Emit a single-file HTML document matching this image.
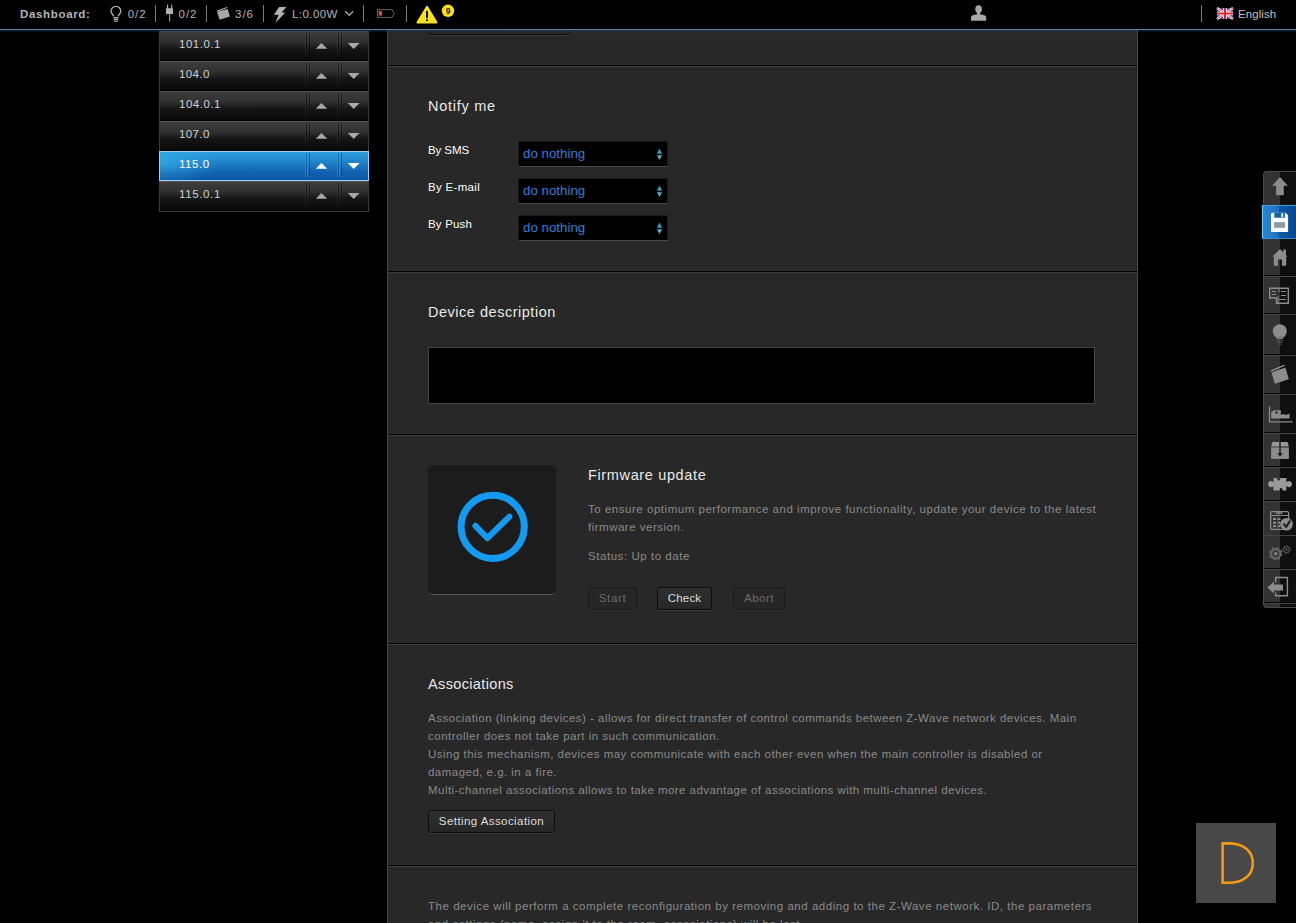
<!DOCTYPE html>
<html><head><meta charset="utf-8">
<style>
*{box-sizing:border-box;margin:0;padding:0}
html,body{width:1296px;height:923px;overflow:hidden;background:#000;font-family:"Liberation Sans",sans-serif;}
body{position:relative}
.abs{position:absolute}
.t{position:absolute;white-space:nowrap;font-size:11.5px;line-height:14px;color:#8a8a8a}
.h{position:absolute;white-space:nowrap;font-size:14.5px;line-height:18px;color:#e8e8e8}
/* top bar */
#topbar{z-index:5;position:absolute;left:0;top:0;width:1296px;height:29px;background:#000}
#topline{z-index:5;position:absolute;left:0;top:29px;width:1296px;height:1px;background:#5d83a6}
#topline2{display:none}
.sep{z-index:6;position:absolute;top:5px;width:1px;height:17px;background:#7c7c7c}
.tb{z-index:6;position:absolute;white-space:nowrap;font-size:11.5px;line-height:14px;color:#b4b4b4;top:7px}
/* list */
#list{position:absolute;left:159px;top:31px;width:210px;height:181px;border:1px solid #3a3a3a;border-top:none;background:#000}
.row{position:absolute;left:0;width:208px;height:30px;background:linear-gradient(#3d3d3d 0%,#303030 35%,#151515 60%,#0a0a0a 100%);border-top:1px solid #555;border-bottom:1px solid #000}
.row .lbl{position:absolute;left:19px;top:5px;font-size:11.5px;line-height:14px;color:#d0d0d0;white-space:nowrap}
.row .s1{position:absolute;top:1px;height:24px;width:1px;background:linear-gradient(#1e1e1e,#080808)}
.row .s2{position:absolute;top:1px;height:24px;width:1px;background:linear-gradient(#474747,#1c1c1c);opacity:.7}
.row svg{position:absolute}
.tri{fill:#a8a8a8}
.row.sel .tri{fill:#fff}
.row.sel .s1{background:#0d4f94;opacity:.6}
.row.sel .s2{background:#3a9ae0;opacity:.5}
.row.sel{left:-1px;width:210px;background:radial-gradient(ellipse 60px 22px at 0 40%,rgba(60,190,240,.55),rgba(60,190,240,0)),linear-gradient(#2a9ddb 0%,#1f80c8 40%,#1262b0 70%,#0c58a6 100%);border:1px solid #9ccff2;}
.row.sel .lbl{color:#fff;left:19px}
/* panel */
#panel{position:absolute;left:387px;top:30px;width:751px;height:893px;background:#282828;border-left:1px solid #444;border-right:1px solid #444}
.div{position:absolute;left:388px;width:749px;height:2px;border-top:1px solid #000;border-bottom:1px solid #3c3c3c}
.sel-box{position:absolute;left:518px;width:150px;height:26px;background:#000;border:1px solid #1a1a1a;border-bottom-color:#4a4a4a;}
.sel-box span{position:absolute;left:4px;top:4px;font-size:13.33px;line-height:16px;color:#2f7fd8;white-space:nowrap}
.btn{position:absolute;height:23px;border:1px solid #0c0c0c;border-radius:3px;background:linear-gradient(#303030,#262626);box-shadow:0 1px 0 #3a3a3a;font-size:11.5px;line-height:14px;color:#ddd;text-align:center;padding-top:3px;white-space:nowrap}
.btn.dis{color:#6c6c6c;border-color:#1a1a1a;box-shadow:0 1px 0 #303030;background:#262626}
</style></head><body>
<div id="topbar"></div><div id="topline"></div><div id="topline2"></div>
<span class="tb" id="dash" style="left:20px;font-weight:bold;letter-spacing:0.66px">Dashboard:</span>
<span class="tb" id="c1" style="left:127.7px;letter-spacing:1.0px">0/2</span>
<div class="sep" style="left:155px"></div>
<span class="tb" id="c2" style="left:178.5px;letter-spacing:1.0px">0/2</span>
<div class="sep" style="left:206px"></div>
<span class="tb" id="c3" style="left:235px;letter-spacing:1.0px">3/6</span>
<div class="sep" style="left:263px"></div>
<span class="tb" id="c4" style="left:292px;letter-spacing:0.43px">L:0.00W</span>
<div class="sep" style="left:363px"></div>
<div class="sep" style="left:406px"></div>
<div class="sep" style="left:1201px"></div>
<span class="tb" id="eng" style="left:1238px;color:#c0c0c0;letter-spacing:0.08px">English</span>

<svg class="abs" style="left:0;top:0;z-index:6" width="1296" height="30" viewBox="0 0 1296 30">
<!-- bulb -->
<g fill="none" stroke="#b0b0b0" stroke-width="1.3">
<path d="M113.6 16.3 C113.4 14.6 111 13.6 111 11.2 A4.9 4.9 0 0 1 120.8 11.2 C120.8 13.6 118.4 14.6 118.2 16.3"/>
<path d="M113.4 17.6 H118.4 M113.6 19.4 H118.2 M114 21.2 H117.8"/>
</g>
<!-- plug -->
<g fill="#b0b0b0"><rect x="167" y="4.6" width="1.1" height="4"/><rect x="171.2" y="4.6" width="1.1" height="4"/><rect x="166" y="8.2" width="7" height="5.8"/><rect x="169" y="14" width="1.1" height="7.6" fill="#9a9a9a"/></g>
<!-- blinds -->
<g fill="#a8a8a8"><path d="M217 11.8 L227.6 8.9 L230 16.6 L219.6 19.8Z"/><path d="M217.2 10.6 L227.2 6.9 L227.5 7.8 L217.5 11.4Z" fill="#c8c8c8"/></g>
<!-- bolt -->
<path d="M279.2 6.9 L286.4 6.9 L281.6 12.6 L285.3 12.6 L275.4 22.9 L278.6 14.8 L273.9 14.8Z" fill="#b4b4b4"/>
<!-- chevron -->
<path d="M345.2 11.2 L349.2 15.3 L353.2 11.2" fill="none" stroke="#a4a4a4" stroke-width="1.3"/>
<!-- battery -->
<path d="M377.5 9.6 H392 L394.2 13.5 L392 17.4 H377.5Z" fill="none" stroke="#6e5e5e" stroke-width="1"/>
<rect x="378.6" y="10.8" width="3.6" height="5" fill="#a83a3a"/><rect x="379.6" y="12" width="1.6" height="2.6" fill="#d07878"/>
<!-- warning -->
<path d="M427 7 L436.2 22.4 L417.8 22.4Z" fill="#f7e21a" stroke="#f7e21a" stroke-width="2.4" stroke-linejoin="round"/>
<rect x="426" y="10.8" width="2" height="7.4" rx=".6" fill="#111"/><rect x="426" y="19.2" width="2" height="2" rx=".6" fill="#111"/>
<circle cx="448" cy="10.8" r="6.2" fill="#f7e21a"/>
<text x="448" y="13.9" font-family="Liberation Sans, sans-serif" font-size="8.5" font-weight="bold" fill="#222" text-anchor="middle">9</text>
<!-- user -->
<g fill="#a8a8a8"><ellipse cx="978.6" cy="9.2" rx="3.3" ry="3.9"/><rect x="977.2" y="12" width="2.8" height="3.5"/><path d="M971 20.8 V17 Q971 15.2 973.5 14.9 L977.2 14.2 H980 L983.7 14.9 Q986.2 15.2 986.2 17 V20.8Z"/></g>
<!-- flag -->
<g><rect x="1217" y="8" width="16" height="11" fill="#2a3f8f"/>
<path d="M1217 8 L1233 19 M1233 8 L1217 19" stroke="#fff" stroke-width="2.4"/>
<path d="M1217 8 L1233 19 M1233 8 L1217 19" stroke="#d8303a" stroke-width="0.9"/>
<path d="M1225 8 V19 M1217 13.5 H1233" stroke="#fff" stroke-width="3.6"/>
<path d="M1225 8 V19 M1217 13.5 H1233" stroke="#e02030" stroke-width="2"/></g>
</svg>
<div id="list">
 <div class="row" style="top:0"><span class="lbl" id="r1" style="letter-spacing:0.52px">101.0.1</span><i class="s2" style="left:145px"></i><i class="s1" style="left:146px"></i><i class="s2" style="left:147px;opacity:.6"></i><i class="s1" style="left:149px;opacity:.7"></i><i class="s2" style="left:177px"></i><i class="s1" style="left:178px"></i><i class="s2" style="left:179px;opacity:.6"></i><i class="s1" style="left:181px;opacity:.7"></i><svg style="left:150px;top:6px" width="56" height="18" viewBox="0 0 56 18"><path d="M5.8 10.8 L11.4 5 L17.2 10.8Z" class="tri"/><path d="M37.8 5 L49.6 5 L43.7 11Z" class="tri"/></svg></div>
 <div class="row" style="top:30px"><span class="lbl" id="r2" style="letter-spacing:0.38px">104.0</span><i class="s2" style="left:145px"></i><i class="s1" style="left:146px"></i><i class="s2" style="left:147px;opacity:.6"></i><i class="s1" style="left:149px;opacity:.7"></i><i class="s2" style="left:177px"></i><i class="s1" style="left:178px"></i><i class="s2" style="left:179px;opacity:.6"></i><i class="s1" style="left:181px;opacity:.7"></i><svg style="left:150px;top:6px" width="56" height="18" viewBox="0 0 56 18"><path d="M5.8 10.8 L11.4 5 L17.2 10.8Z" class="tri"/><path d="M37.8 5 L49.6 5 L43.7 11Z" class="tri"/></svg></div>
 <div class="row" style="top:60px"><span class="lbl" id="r3" style="letter-spacing:0.52px">104.0.1</span><i class="s2" style="left:145px"></i><i class="s1" style="left:146px"></i><i class="s2" style="left:147px;opacity:.6"></i><i class="s1" style="left:149px;opacity:.7"></i><i class="s2" style="left:177px"></i><i class="s1" style="left:178px"></i><i class="s2" style="left:179px;opacity:.6"></i><i class="s1" style="left:181px;opacity:.7"></i><svg style="left:150px;top:6px" width="56" height="18" viewBox="0 0 56 18"><path d="M5.8 10.8 L11.4 5 L17.2 10.8Z" class="tri"/><path d="M37.8 5 L49.6 5 L43.7 11Z" class="tri"/></svg></div>
 <div class="row" style="top:90px"><span class="lbl" id="r4" style="letter-spacing:0.38px">107.0</span><i class="s2" style="left:145px"></i><i class="s1" style="left:146px"></i><i class="s2" style="left:147px;opacity:.6"></i><i class="s1" style="left:149px;opacity:.7"></i><i class="s2" style="left:177px"></i><i class="s1" style="left:178px"></i><i class="s2" style="left:179px;opacity:.6"></i><i class="s1" style="left:181px;opacity:.7"></i><svg style="left:150px;top:6px" width="56" height="18" viewBox="0 0 56 18"><path d="M5.8 10.8 L11.4 5 L17.2 10.8Z" class="tri"/><path d="M37.8 5 L49.6 5 L43.7 11Z" class="tri"/></svg></div>
 <div class="row sel" style="top:120px"><span class="lbl" id="r5" style="letter-spacing:0.55px">115.0</span><i class="s2" style="left:145px"></i><i class="s1" style="left:146px"></i><i class="s2" style="left:147px;opacity:.6"></i><i class="s1" style="left:149px;opacity:.7"></i><i class="s2" style="left:177px"></i><i class="s1" style="left:178px"></i><i class="s2" style="left:179px;opacity:.6"></i><i class="s1" style="left:181px;opacity:.7"></i><svg style="left:150px;top:6px" width="56" height="18" viewBox="0 0 56 18"><path d="M5.8 10.8 L11.4 5 L17.2 10.8Z" class="tri"/><path d="M37.8 5 L49.6 5 L43.7 11Z" class="tri"/></svg></div>
 <div class="row" style="top:150px"><span class="lbl" id="r6" style="letter-spacing:0.64px">115.0.1</span><i class="s2" style="left:145px"></i><i class="s1" style="left:146px"></i><i class="s2" style="left:147px;opacity:.6"></i><i class="s1" style="left:149px;opacity:.7"></i><i class="s2" style="left:177px"></i><i class="s1" style="left:178px"></i><i class="s2" style="left:179px;opacity:.6"></i><i class="s1" style="left:181px;opacity:.7"></i><svg style="left:150px;top:6px" width="56" height="18" viewBox="0 0 56 18"><path d="M5.8 10.8 L11.4 5 L17.2 10.8Z" class="tri"/><path d="M37.8 5 L49.6 5 L43.7 11Z" class="tri"/></svg></div>
</div>

<div id="panel"></div>
<div class="btn" style="left:428px;top:12px;width:142px"></div>
<div class="abs" style="left:0;top:30px;width:1296px;height:3px;background:linear-gradient(rgba(30,60,95,.55),rgba(30,60,95,0))"></div>
<div class="div" style="top:65px"></div>
<div class="div" style="top:271px"></div>
<div class="div" style="top:434px"></div>
<div class="div" style="top:643px"></div>
<div class="div" style="top:865px"></div>

<span class="h" id="h1" style="left:428px;top:97px;letter-spacing:0.73px">Notify me</span>
<span class="t" id="n1" style="left:428px;top:143px;color:#fff;letter-spacing:-0.09px">By SMS</span>
<span class="t" id="n2" style="left:428px;top:180px;color:#fff;letter-spacing:0.31px">By E-mail</span>
<span class="t" id="n3" style="left:428px;top:217px;color:#fff;letter-spacing:0.17px">By Push</span>
<div class="sel-box" style="top:141px"><span id="s1">do nothing</span><svg style="position:absolute;left:136.2px;top:5px" width="8" height="14" viewBox="0 0 8 14"><path d="M4.5 1.4 L7.1 6.8 H1.9Z" fill="#3a98bc"/><path d="M1.9 8.2 H7.1 L4.5 13Z" fill="#56b0c8"/></svg></div>
<div class="sel-box" style="top:178px"><span>do nothing</span><svg style="position:absolute;left:136.2px;top:5px" width="8" height="14" viewBox="0 0 8 14"><path d="M4.5 1.4 L7.1 6.8 H1.9Z" fill="#3a98bc"/><path d="M1.9 8.2 H7.1 L4.5 13Z" fill="#56b0c8"/></svg></div>
<div class="sel-box" style="top:215px"><span>do nothing</span><svg style="position:absolute;left:136.2px;top:5px" width="8" height="14" viewBox="0 0 8 14"><path d="M4.5 1.4 L7.1 6.8 H1.9Z" fill="#3a98bc"/><path d="M1.9 8.2 H7.1 L4.5 13Z" fill="#56b0c8"/></svg></div>

<span class="h" id="h2" style="left:428px;top:303px;letter-spacing:0.52px">Device description</span>
<div class="abs" style="left:428px;top:347px;width:667px;height:57px;background:#000;border:1px solid #444"></div>

<div class="abs" id="fwbox" style="left:428px;top:465px;width:128px;height:130px;background:#1c1c1c;border-radius:5px;border-bottom:1px solid #5a5a5a"></div>
<svg class="abs" style="left:428px;top:465px" width="128" height="130" viewBox="428 465 128 130"><circle cx="492.7" cy="526.8" r="31.6" fill="none" stroke="#149af0" stroke-width="7"/><path d="M475.4 525.8 L487.4 538.2 L509.4 516.6" fill="none" stroke="#149af0" stroke-width="6" stroke-linecap="round" stroke-linejoin="round"/></svg>
<span class="h" id="h3" style="left:588px;top:466px;letter-spacing:0.64px">Firmware update</span>
<span class="t" id="f1" style="left:588px;top:502px;letter-spacing:0.528px">To ensure optimum performance and improve functionality, update your device to the latest</span>
<span class="t" id="f2" style="left:588px;top:520px;letter-spacing:0.5px">firmware version.</span>
<span class="t" id="f3" style="left:588px;top:549px;letter-spacing:0.55px">Status: Up to date</span>
<div class="btn dis" id="b1" style="left:588px;top:587px;width:49px"><span id="b1t" style="letter-spacing:0.64px">Start</span></div>
<div class="btn" id="b2" style="left:657px;top:587px;width:55px"><span id="b2t" style="letter-spacing:0.2px">Check</span></div>
<div class="btn dis" id="b3" style="left:733px;top:587px;width:52px"><span id="b3t" style="letter-spacing:0.44px">Abort</span></div>

<span class="h" id="h4" style="left:428px;top:675px;letter-spacing:0.36px">Associations</span>
<span class="t" id="a1" style="left:428px;top:711px;letter-spacing:0.48px">Association (linking devices) - allows for direct transfer of control commands between Z-Wave network devices. Main</span>
<span class="t" id="a2" style="left:428px;top:729px;letter-spacing:0.498px">controller does not take part in such communication.</span>
<span class="t" id="a3" style="left:428px;top:747px;letter-spacing:0.486px">Using this mechanism, devices may communicate with each other even when the main controller is disabled or</span>
<span class="t" id="a4" style="left:428px;top:765px;letter-spacing:0.473px">damaged, e.g. in a fire.</span>
<span class="t" id="a5" style="left:428px;top:783px;letter-spacing:0.451px">Multi-channel associations allows to take more advantage of associations with multi-channel devices.</span>
<div class="btn" id="b4" style="left:428px;top:810px;width:127px"><span id="b4t" style="letter-spacing:0.43px">Setting Association</span></div>
<span class="t" id="d1" style="left:428px;top:899px;letter-spacing:0.531px">The device will perform a complete reconfiguration by removing and adding to the Z-Wave network. ID, the parameters</span>
<span class="t" id="d2" style="left:428px;top:917px;letter-spacing:0.5px">and settings (name, assign it to the room, associations) will be lost.</span>

<div class="abs" id="dbox" style="left:1196px;top:823px;width:80px;height:80px;background:#484848"></div>
<svg class="abs" style="left:1256px;top:166px" width="40" height="446" viewBox="1256 166 40 446">
<defs>
<linearGradient id="sbl" x1="0" x2="1" y1="0" y2="0"><stop offset="0" stop-color="#2f86d6"/><stop offset="0.5" stop-color="#1f6fc0"/><stop offset="0.5" stop-color="#0f58a6"/><stop offset="1" stop-color="#0a478c"/></linearGradient>
</defs>
<!-- body -->
<path d="M1296 171 H1267 Q1263 171 1263 175 V604 Q1263 608 1267 608 H1296Z" fill="#0f0f0f"/>
<path d="M1280 171 H1267 Q1263 171 1263 175 V604 Q1263 608 1267 608 H1280Z" fill="#333"/>
<path d="M1296 171.5 H1267 Q1263.5 171.5 1263.5 175 V604 Q1263.5 607.5 1267 607.5 H1296" fill="none" stroke="#4a4a4a" stroke-width="1"/>
<!-- dividers -->
<g stroke="#080808" stroke-width="1"><path d="M1264 275.5H1296M1264 313.5H1296M1264 354.5H1296M1264 393.5H1296M1264 432.5H1296M1264 466.5H1296M1264 500.5H1296M1264 568.5H1296M1264 602.5H1296"/></g>
<g stroke="#444" stroke-width="1"><path d="M1264 276.5H1296M1264 314.5H1296M1264 355.5H1296M1264 394.5H1296M1264 433.5H1296M1264 467.5H1296M1264 501.5H1296M1264 535.5H1296M1264 569.5H1296M1264 603.5H1296"/></g>
<!-- up arrow -->
<path d="M1280 177 L1287.8 185.8 H1283.8 V195.3 H1276.1 V185.8 H1272.1Z" fill="#8c8c8c"/>
<!-- save selected -->
<rect x="1262" y="205" width="34" height="34" fill="url(#sbl)"/>
<path d="M1262.5 239 V205.5 H1296" fill="none" stroke="#58d8f0" stroke-width="1"/>
<path d="M1263 205.5 H1296" stroke="#3f9fe6" stroke-width="1"/>
<path d="M1262 238.5 H1296" stroke="#3a90d8" stroke-width="1" opacity=".8"/>
<path d="M1272.5 212.7 H1285.5 L1288.1 215.3 V231.9 H1271 V214.2 Q1271 212.7 1272.5 212.7Z" fill="#fff"/>
<rect x="1274.3" y="212.7" width="10.6" height="5" fill="#1660ac"/>
<rect x="1281.3" y="213.3" width="1.8" height="3.8" fill="#fff"/>
<rect x="1274" y="222.2" width="11" height="5.6" fill="#8c9aa6"/>
<!-- home -->
<path d="M1280 249 L1287.6 256.6 H1286.2 V265.8 H1282 V259.6 H1278 V265.8 H1273.8 V256.6 H1272.4Z M1283.2 249.4 H1286 V255.4 L1283.2 252.6Z" fill="#8c8c8c"/>
<!-- plan -->
<g fill="none" stroke="#8c8c8c" stroke-width="1.4"><path d="M1269.7 288.2 H1288.3 V303.2 H1276.5 V298 H1269.7Z"/></g>
<g stroke="#8c8c8c" stroke-width="1"><path d="M1272 291.5 H1276 M1272 294.5 H1276 M1279 288 V292 M1281 291.5 H1286 M1281 295.5 H1286 M1279 299.5 H1286 M1278 296 V303"/></g>
<!-- bulb filled -->
<circle cx="1279.8" cy="331.2" r="7" fill="#8c8c8c"/>
<path d="M1276.4 336.5 H1283.2 V339 H1276.4Z" fill="#7a7a7a"/><path d="M1276.8 340.3 H1282.8 M1277.2 342.3 H1282.4 M1278.4 344.2 H1281.2" stroke="#5c5c5c" stroke-width="1.1"/>
<!-- blinds -->
<path d="M1271.5 372.6 L1285.5 367.4 L1288.8 379.2 L1274.8 383.8Z" fill="#8c8c8c"/>
<path d="M1271 371 L1284.6 365.2" stroke="#a8a8a8" stroke-width="1.2"/>
<!-- chart -->
<path d="M1269.5 406.6 V421.8 H1292.5" fill="none" stroke="#8c8c8c" stroke-width="1.3"/>
<path d="M1271.2 418.6 V412 L1274 410.2 H1280.8 V415 L1283 414 L1286 415 L1289.5 413.5 V418.6Z" fill="#8c8c8c"/>
<circle cx="1276.5" cy="412.6" r="1.3" fill="#333"/>
<!-- box -->
<path d="M1272.6 442 H1287.4 L1288.9 446.6 H1271.1Z" fill="#9a9a9a"/>
<rect x="1271.1" y="447.4" width="17.8" height="11.5" fill="#8c8c8c"/>
<path d="M1279.3 442 H1280.7 V453 H1282.6 L1280 457 L1277.4 453 H1279.3Z" fill="#1a1a1a"/>
<!-- puzzle -->
<path d="M1273.5 478 H1277.2 Q1276.6 480.6 1278.6 480.6 Q1280.6 480.6 1280 478 H1286.4 V482.2 Q1288 481 1289.6 481 Q1292 481.4 1292 484.2 Q1292 487 1289.6 487.3 Q1288 487.3 1286.4 486 V490.6 H1282.4 Q1283 488 1281 488 Q1279 488 1279.6 490.6 H1273.5 V486.2 Q1272 487.4 1270.4 487.3 Q1268 487 1268 484.2 Q1268 481.4 1270.4 481 Q1272 481 1273.5 482.2Z" fill="#9a9a9a"/>
<!-- calendar -->
<rect x="1270.6" y="511.6" width="18" height="17.8" rx="1.5" fill="none" stroke="#8c8c8c" stroke-width="1.3"/>
<path d="M1271 515.5 H1288" stroke="#8c8c8c" stroke-width="1"/>
<rect x="1276" y="512.3" width="6.5" height="1.6" fill="#8c8c8c"/>
<g fill="#8c8c8c"><rect x="1273" y="518" width="3" height="2"/><rect x="1277.5" y="518" width="3" height="2"/><rect x="1273" y="521.7" width="3" height="2"/><rect x="1277.5" y="521.7" width="3" height="2"/><rect x="1273" y="525.2" width="3" height="2"/><rect x="1277.5" y="525.2" width="3" height="2"/></g>
<circle cx="1286.5" cy="524.3" r="6.3" fill="#8c8c8c"/>
<path d="M1283.4 523.6 L1286.2 526.8 L1290.2 520.6" fill="none" stroke="#1c1c1c" stroke-width="2"/>
<!-- gears -->
<g fill="none" stroke="#666"><circle cx="1275.7" cy="553.7" r="4.6" stroke-width="2.2"/><circle cx="1275.7" cy="553.7" r="6" stroke-width="1.6" stroke-dasharray="2.4 2.3"/></g>
<circle cx="1275.7" cy="553.7" r="2" fill="#777"/>
<g fill="none" stroke="#666"><circle cx="1286.5" cy="549.6" r="2.9" stroke-width="1"/><circle cx="1286.5" cy="549.6" r="3.8" stroke-width="1" stroke-dasharray="1.4 1.5"/></g>
<circle cx="1286.5" cy="549.6" r="1" fill="#777"/>
<!-- exit -->
<path d="M1275.6 582.5 V577.5 H1287.4 V595.7 H1275.6 V592.5" fill="none" stroke="#8c8c8c" stroke-width="1.4"/>
<path d="M1267.4 587.6 L1274 581.6 V584.6 H1283 V590.6 H1274 V593.6Z" fill="#8c8c8c"/>
</svg>

<svg class="abs" style="left:1196px;top:823px" width="80" height="80" viewBox="1196 823 80 80"><path d="M1222.6 843.4 H1228 C1244 843.4 1252.8 851 1252.8 863 C1252.8 875.4 1243.5 882.8 1228 882.8 H1222.6Z" fill="none" stroke="#f39a14" stroke-width="2.6"/></svg>
</body></html>
